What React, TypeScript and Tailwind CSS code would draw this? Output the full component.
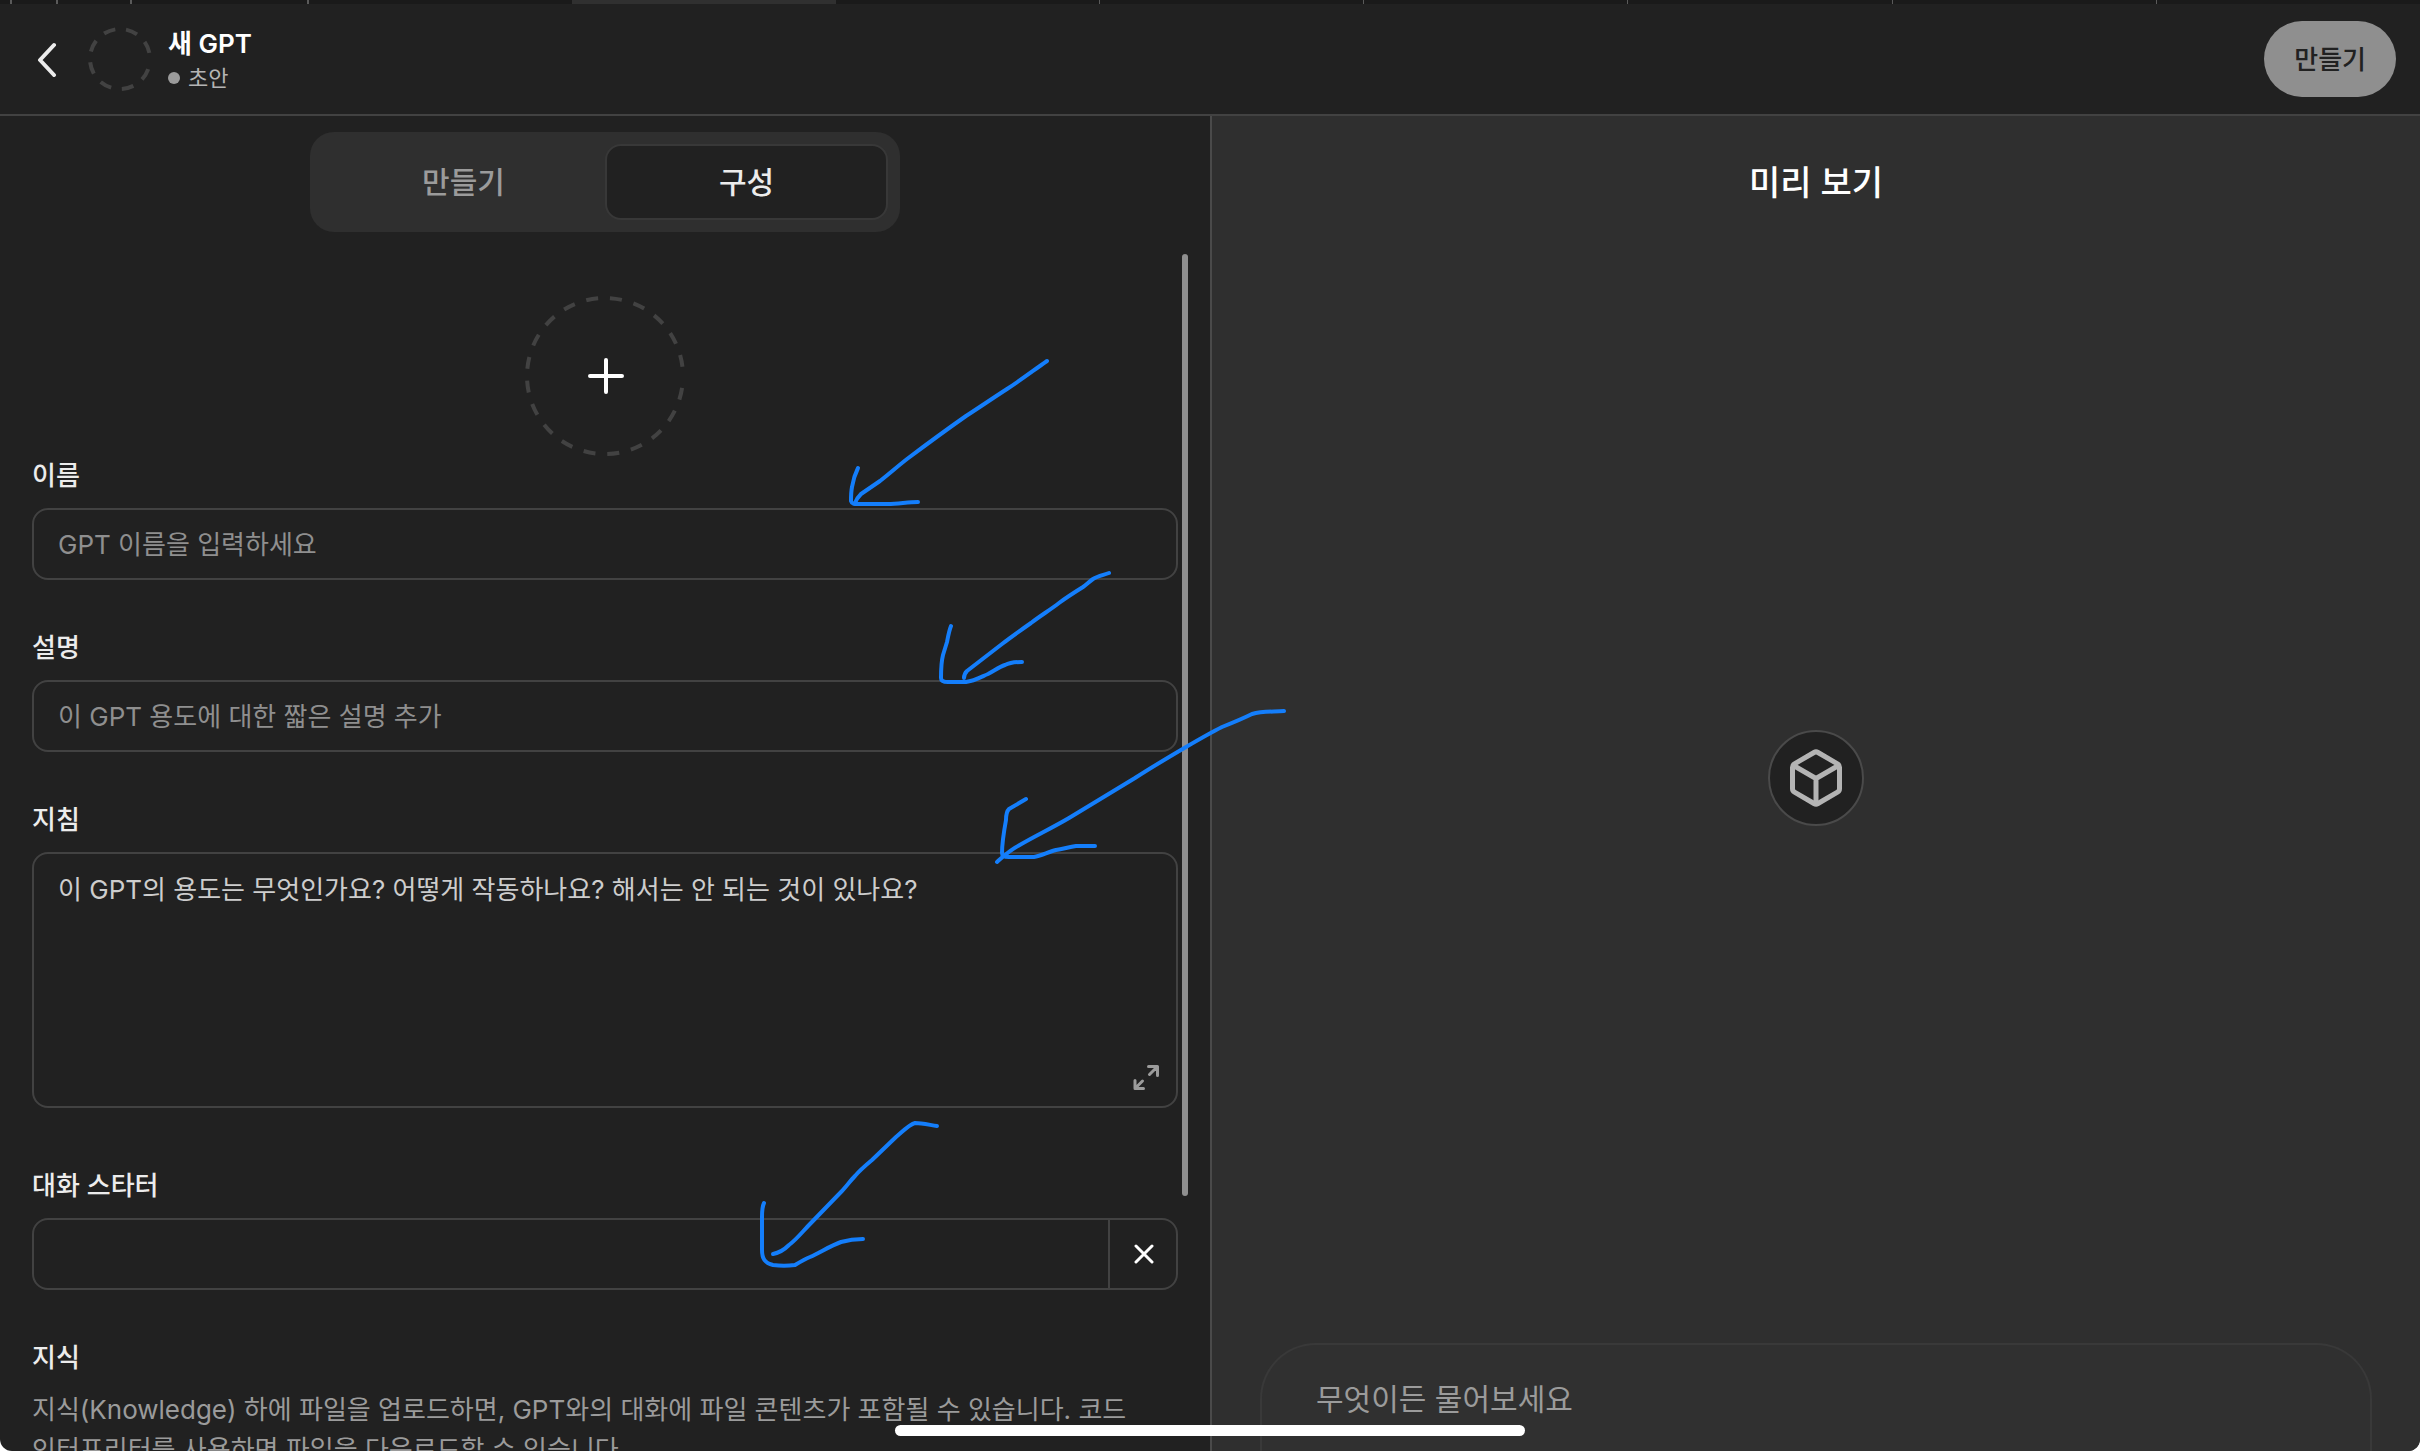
import React from "react";

const tabStrip = [
  "w-3 border-r-2",
  "w-[46px] border-r-2",
  "w-[74px] border-r-2",
  "w-[177px] border-r-2",
  "flex-1",
  "flex-1 bg-[#303030]",
  "flex-1 border-r",
  "flex-1 border-r",
  "flex-1 border-r",
  "flex-1 border-r",
  "flex-1 border-r",
  "flex-1",
];

const strokes = [
  "M1047 361C1034 370 1021 380 1007 389C993 398 980 407 966 416C946 430 927 444 907 459C898 466 889 474 880 481L861 494C858 497 856 500 855 503",
  "M858 468C855 474 853 481 852 487C851 492 851 497 851 501C852 505 856 504 862 504H888C898 504 908 502 918 502",
  "M1109 573C1104 575 1098 576 1093 579C1090 581 1086 585 1083 587C1075 592 1067 597 1059 603C1050 610 1040 616 1031 623C1021 630 1011 637 1002 644L967 671C965 673 964 675 964 678",
  "M951 626C949 631 948 637 947 642L943 655C941 663 941 671 941 678C941 681 944 682 948 682H966C974 681 981 677 988 674C994 671 999 667 1005 665C1011 662 1016 662 1022 662",
  "M1284 711C1274 712 1263 711 1252 714C1242 719 1232 723 1222 727C1210 733 1198 740 1186 747C1169 757 1152 767 1135 778L1069 818C1052 828 1035 836 1018 846C1010 850 1006 854 997 862",
  "M1026 799L1009 809C1007 811 1006 813 1006 820C1004 831 1002 843 1002 853C1002 856 1004 857 1009 857H1034C1041 856 1048 852 1056 850C1063 849 1069 847 1076 846H1095",
  "M937 1126C930 1125 922 1123 915 1123C910 1124 903 1131 896 1137L872 1160C866 1165 860 1170 855 1176C850 1181 846 1187 841 1192L810 1224C803 1231 797 1239 789 1245C784 1250 778 1253 773 1254",
  "M764 1203C762 1207 762 1212 762 1217V1250C762 1259 765 1263 773 1265C780 1266 788 1266 795 1265C800 1262 805 1259 810 1257C821 1252 830 1246 841 1242C848 1240 856 1239 863 1239",
];

function Label({ htmlFor, children }: { htmlFor?: string; children: React.ReactNode }) {
  const style = "mb-3 block text-[26px] leading-10 font-medium text-[#ececec]";
  return htmlFor ? (
    <label htmlFor={htmlFor} className={style}>
      {children}
    </label>
  ) : (
    <h2 className={style}>{children}</h2>
  );
}

const fieldStyle =
  "block w-full rounded-2xl border-2 border-[#424242] bg-transparent px-6 text-[26px] leading-10 text-[#ececec] outline-none";

function Header() {
  return (
    <header className="flex h-28 shrink-0 items-center border-b-2 border-[#424242] pr-6 pl-9">
      <button type="button" aria-label="뒤로" className="mr-7 text-[#ececec]">
        <svg width="24" height="36" viewBox="0 0 24 36" fill="none" stroke="currentColor" strokeWidth="4" strokeLinecap="round" strokeLinejoin="round">
          <path d="M18 4L4 19L18 34" />
        </svg>
      </button>
      <svg className="mr-4 shrink-0 text-[#424242]" width="64" height="64" viewBox="0 0 64 64" fill="none" stroke="currentColor" strokeWidth="4">
        <circle cx="32" cy="32" r="30" strokeDasharray="12 10.8" strokeDashoffset="-10.4" />
      </svg>
      <div className="flex-1 pt-0.5">
        <h1 className="text-[26px] leading-9 font-semibold text-white">새 GPT</h1>
        <p className="flex items-center gap-2 text-[22px] leading-8 text-[#b4b4b4]">
          <span className="size-3 rounded-full bg-[#9b9b9b]" />
          초안
        </p>
      </div>
      <button type="button" className="h-19 rounded-full bg-[#8f8f8f] px-[30px] text-[26px] font-medium text-[#212121]">
        만들기
      </button>
    </header>
  );
}

function Configure() {
  return (
    <section className="relative flex min-h-0 flex-col overflow-hidden pt-4">
      <div role="tablist" className="mx-auto grid w-[590px] shrink-0 grid-cols-2 rounded-3xl bg-[#2f2f2f] p-3 text-[30px] font-medium">
        <button type="button" role="tab" aria-selected="false" className="h-19 text-[#9b9b9b]">
          만들기
        </button>
        <button type="button" role="tab" aria-selected="true" className="h-19 rounded-2xl border-2 border-[#383838] bg-[#212121] text-[#ececec]">
          구성
        </button>
      </div>

      <form className="mt-16 flex-1 px-8">
        <button type="button" aria-label="이미지 추가" className="mx-auto block">
          <svg width="160" height="160" viewBox="0 0 160 160" fill="none" strokeWidth="4">
            <circle cx="80" cy="80" r="78" stroke="#424242" strokeDasharray="12 12" strokeDashoffset="-12" />
            <path d="M81 64V96M65 80H97" stroke="#ffffff" strokeLinecap="round" />
          </svg>
        </button>

        <div className="mb-12">
          <Label htmlFor="name">이름</Label>
          <input id="name" type="text" placeholder="GPT 이름을 입력하세요" className={`${fieldStyle} h-18 placeholder:text-[#8f8f8f]`} />
        </div>
        <div className="mb-12">
          <Label htmlFor="description">설명</Label>
          <input id="description" type="text" placeholder="이 GPT 용도에 대한 짧은 설명 추가" className={`${fieldStyle} h-18 placeholder:text-[#8f8f8f]`} />
        </div>
        <div className="relative mb-[58px]">
          <Label htmlFor="instructions">지침</Label>
          <textarea
            id="instructions"
            placeholder="이 GPT의 용도는 무엇인가요? 어떻게 작동하나요? 해서는 안 되는 것이 있나요?"
            className={`${fieldStyle} h-64 resize-none py-4 placeholder:text-[#cdcdcd]`}
          />
          <button type="button" aria-label="확장" className="absolute right-[18px] bottom-4 text-[#9b9b9b]">
            <svg width="28" height="28" viewBox="0 0 28 28" fill="none" stroke="currentColor" strokeWidth="3" strokeLinecap="round" strokeLinejoin="round">
              <path d="M16.500 2.500H25.500V11.500M25 3L17.500 10.500M3 16.500V24.500H11.500M3.500 24L10.500 17" />
            </svg>
          </button>
        </div>
        <div className="mb-12">
          <Label htmlFor="starter">대화 스타터</Label>
          <div className="flex h-18 rounded-2xl border-2 border-[#424242]">
            <input id="starter" type="text" className="min-w-0 flex-1 bg-transparent px-6 text-[26px] text-[#ececec] outline-none" />
            <button type="button" aria-label="삭제" className="flex w-17 items-center justify-center border-l-2 border-[#424242] text-white">
              <svg width="22" height="22" viewBox="0 0 22 22" fill="none" stroke="currentColor" strokeWidth="3" strokeLinecap="round">
                <path d="M4 3L20 19M20 3L4 19" />
              </svg>
            </button>
          </div>
        </div>
        <Label>지식</Label>
        <p className="text-[26px] leading-10 break-keep text-[#9b9b9b]">
          지식(Knowledge) 하에 파일을 업로드하면, GPT와의 대화에 파일 콘텐츠가 포함될 수 있습니다. 코드 인터프리터를 사용하면 파일을 다운로드할 수 있습니다.
        </p>
      </form>
      <div className="absolute top-[138px] right-[22px] h-[942px] w-1.5 rounded-full bg-[#8f8f8f]" />
    </section>
  );
}

function Preview() {
  return (
    <section className="flex min-h-0 flex-col border-l-2 border-[#4a4a4a] bg-[#2f2f2f] px-12">
      <h2 className="py-11 text-center text-[34px] leading-[46px] font-medium text-white">미리 보기</h2>
      <div className="flex flex-1 items-center justify-center pb-[38px]">
        <div className="flex size-24 items-center justify-center rounded-full border-2 border-[#4a4a4a] bg-[#212121] text-[#b4b4b4]">
          <svg width="60" height="60" viewBox="0 0 60 60" fill="none" stroke="currentColor" strokeWidth="5" strokeLinejoin="round">
            <path d="M28 4.500Q30 3.300 32 4.500L51.500 15.800Q53.500 17 53.500 19.300V40.700Q53.500 43 51.500 44.200L32 55.500Q30 56.700 28 55.500L8.500 44.200Q6.500 43 6.500 40.700V19.300Q6.500 17 8.500 15.800Z" />
            <path d="M7.500 17.500L30 30.500L52.500 17.500M30 30.500V56" />
          </svg>
        </div>
      </div>
      <div className="h-27 shrink-0 rounded-t-[56px] border-2 border-b-0 border-[#393939] bg-[#303030] px-[54px] pt-8">
        <input
          type="text"
          aria-label="메시지"
          placeholder="무엇이든 물어보세요"
          className="block w-full bg-transparent text-[30px] leading-[44px] text-[#ececec] outline-none placeholder:text-[#9b9b9b]"
        />
      </div>
    </section>
  );
}

export default function App() {
  return (
    <div className="h-screen bg-white font-['Inter','Noto_Sans_CJK_KR',sans-serif]">
      <div className="relative flex h-full flex-col overflow-hidden rounded-b-xl bg-[#212121]">
        <div className="flex h-1 shrink-0 bg-[#1a1a1a]">
          {tabStrip.map((style, i) => (
            <div key={i} className={`${style} border-[#5a5a5a]`} />
          ))}
        </div>
        <Header />
        <main className="grid min-h-0 flex-1 grid-cols-2">
          <Configure />
          <Preview />
        </main>
        <svg
          className="pointer-events-none absolute top-0 left-0"
          width="1300"
          height="1300"
          viewBox="0 0 1300 1300"
          fill="none"
          stroke="#147efb"
          strokeWidth="4"
          strokeLinecap="round"
          strokeLinejoin="round"
        >
          {strokes.map((d) => (
            <path key={d} d={d} />
          ))}
        </svg>
        <div className="absolute bottom-[15px] left-1/2 h-[11px] w-[630px] -translate-x-1/2 rounded-full bg-white" />
      </div>
    </div>
  );
}
